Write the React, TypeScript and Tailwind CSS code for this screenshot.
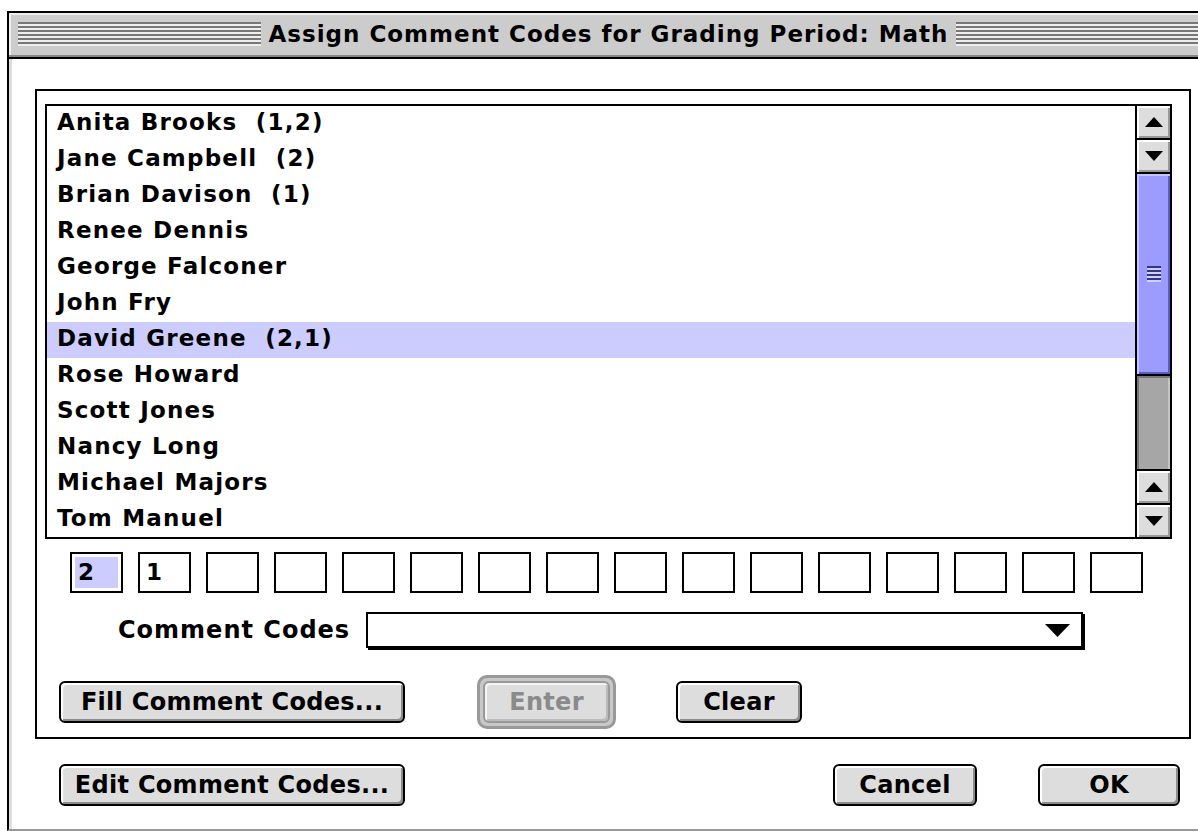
import clsx from 'clsx'

const students = [
  'Anita Brooks  (1,2)',
  'Jane Campbell  (2)',
  'Brian Davison  (1)',
  'Renee Dennis',
  'George Falconer',
  'John Fry',
  'David Greene  (2,1)',
  'Rose Howard',
  'Scott Jones',
  'Nancy Long',
  'Michael Majors',
  'Tom Manuel',
]

const codes = ['2', '1', '', '', '', '', '', '', '', '', '', '', '', '', '', '']

// Horizontal stripes either side of the title
function TitleStripes() {
  return (
    <div className="flex-1 flex flex-col">
      {[0, 1, 2, 3, 4, 5].map((i) => (
        <div key={i} className="h-[4px] border-t-2 border-[#777777] bg-[#eeeeee]" />
      ))}
    </div>
  )
}

function Arrow({ up }: { up?: boolean }) {
  return (
    <div className="h-[32px] bg-[#dddddd] shadow-[inset_2px_2px_0_#ffffff,inset_-2px_-2px_0_#999999] flex items-center justify-center">
      <svg width="18" height="10" viewBox="0 0 18 10">
        {up ? <polygon points="9,0 18,10 0,10" fill="#000" /> : <polygon points="0,0 18,0 9,10" fill="#000" />}
      </svg>
    </div>
  )
}

function Scrollbar() {
  return (
    <div className="w-[35px] border-l-2 border-black flex flex-col">
      <Arrow up />
      <div className="h-[2px] bg-black" />
      <Arrow />
      <div className="h-[2px] bg-black" />
      <div className="h-[200px] bg-[#9c9cff] shadow-[inset_2px_2px_0_#c4c4ff,inset_-2px_-2px_0_#5a5ac8] flex items-center justify-center">
        <div className="flex flex-col w-[14px]">
          {[0, 1, 2, 3].map((i) => (
            <div key={i} className="h-[4px] border-t-2 border-[#33338f] bg-[#d0d0ff]" />
          ))}
        </div>
      </div>
      <div className="h-[2px] bg-black" />
      <div className="flex-1 bg-[#a6a6a6] shadow-[inset_2px_2px_0_#777777,inset_-2px_0_0_#c4c4c4]" />
      <div className="h-[2px] bg-black" />
      <Arrow up />
      <div className="h-[2px] bg-black" />
      <Arrow />
    </div>
  )
}

function MacButton({ label, className, disabled }: { label: string; className?: string; disabled?: boolean }) {
  return (
    <div
      className={clsx(
        'h-[42px] flex items-center justify-center rounded-[6px] border-2 bg-[#dddddd] text-[24px] font-bold tracking-[0.3px]',
        disabled
          ? 'border-[#999999] text-[#8a8a8a] shadow-[inset_2px_2px_0_#f4f4f4,inset_-2px_-2px_0_#bbbbbb]'
          : 'border-black text-black shadow-[inset_2px_2px_0_#ffffff,inset_-2px_-2px_0_#8c8c8c]',
        className
      )}
    >
      {label}
    </div>
  )
}

export default function App() {
  return (
    <div className="w-[1198px] h-[831px] overflow-hidden bg-white font-['DejaVu_Sans',sans-serif]">
      <div className="ml-[7px] mt-[11px] w-[1201px] h-[820px] border-l-2 border-t-2 border-b-2 border-black border-b-[#999999] flex flex-col">
        {/* title bar */}
        <div className="border-b-2 border-black">
          <div className="h-[44px] border-b-2 border-[#888888] bg-[#cccccc] shadow-[inset_2px_2px_0_#eeeeee] flex items-center px-[9px]">
            <TitleStripes />
            <div className="mx-[8px] text-[23px] font-bold tracking-[1px] text-black whitespace-pre leading-none">
              Assign Comment Codes for Grading Period: Math
            </div>
            <TitleStripes />
          </div>
        </div>

        <div className="flex-1 border-l-[3px] border-[#dddddd] flex flex-col">
          {/* group box */}
          <div className="ml-[23px] mt-[30px] w-[1156px] border-2 border-black pl-[8px] pt-[13px] pb-[8px] flex flex-col">
            <div className="w-[1127px] h-[435px] border-2 border-black flex">
              <div className="flex-1 overflow-hidden">
                {students.map((name) => (
                  <div
                    key={name}
                    className={clsx(
                      'h-[36px] leading-[32px] pl-[10px] text-[23px] font-bold tracking-[1.2px] whitespace-pre text-black',
                      name.startsWith('David') && 'bg-[#ccccff]'
                    )}
                  >
                    {name}
                  </div>
                ))}
              </div>
              <Scrollbar />
            </div>

            {/* assigned code slots */}
            <div className="ml-[25px] mt-[13px] flex gap-[15px]">
              {codes.map((c, i) => (
                <div key={i} className="w-[53px] h-[41px] border-2 border-black p-[3px]">
                  <div
                    className={clsx(
                      'h-full pl-[3px] text-[23px] font-bold leading-[31px] text-black',
                      i === 0 && 'bg-[#ccccff]'
                    )}
                  >
                    {c}
                  </div>
                </div>
              ))}
            </div>

            <div className="ml-[73px] mt-[19px] flex items-center">
              <div className="text-[24px] font-bold tracking-[1px] text-black">Comment Codes</div>
              <div className="ml-[16px] w-[717px] h-[36px] border-2 border-black shadow-[2px_2px_0_#000000] flex items-center justify-end pr-[11px]">
                <svg width="25" height="13" viewBox="0 0 25 13">
                  <polygon points="0,0 25,0 12.5,13" fill="#000" />
                </svg>
              </div>
            </div>

            <div className="mt-[27px] ml-[14px] flex items-center">
              <MacButton label="Fill Comment Codes..." className="w-[346px]" />
              <div className="ml-[72px] rounded-[10px] border-[3px] border-[#999999] bg-[#c8c8c8] p-[3px]">
                <MacButton label="Enter" disabled className="w-[127px]" />
              </div>
              <MacButton label="Clear" className="ml-[60px] w-[126px]" />
            </div>
          </div>

          {/* dialog buttons */}
          <div className="mt-[25px] flex items-center">
            <MacButton label="Edit Comment Codes..." className="ml-[47px] w-[346px]" />
            <MacButton label="Cancel" className="ml-[428px] w-[144px]" />
            <MacButton label="OK" className="ml-[61px] w-[142px]" />
          </div>
        </div>
      </div>
    </div>
  )
}
